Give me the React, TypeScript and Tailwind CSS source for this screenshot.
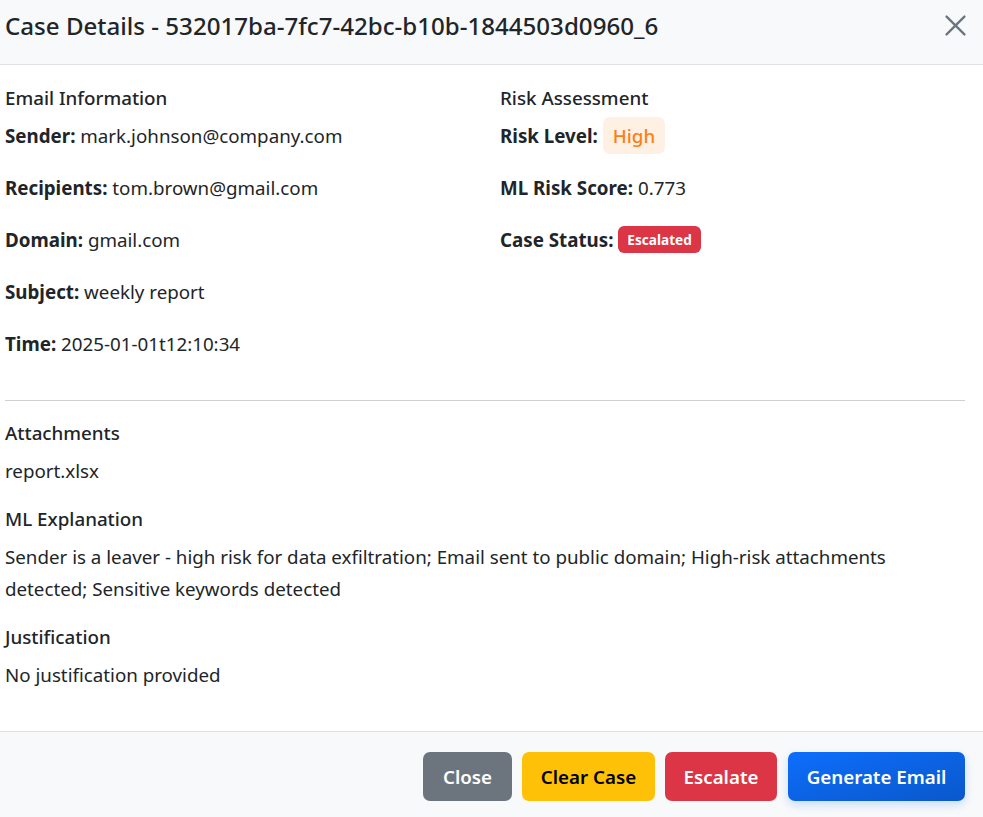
function Row({ label, children }: { label: string; children: React.ReactNode }) {
  return (
    <p className="mb-[20px]">
      <span className="font-bold">{label}</span> {children}
    </p>
  );
}

export default function App() {
  return (
    <div
      className="w-[983px] h-[817px] overflow-hidden bg-white text-[#212529] text-[18.75px] leading-[32px]"
      style={{ fontFamily: '"Noto Sans", sans-serif' }}
    >
      {/* Header */}
      <div className="h-[65px] bg-[#f8f9fa] border-b border-[#dee2e6] flex items-start justify-between pl-[5px] pr-[17px] pt-[11px]">
        <h5 className="text-[24.1px] leading-[30px] font-medium">
          Case Details - 532017ba-7fc7-42bc-b10b-1844503d0960_6
        </h5>
        <button className="mt-[4px] w-[21px] h-[21px] text-[#6c757d]" aria-label="Close">
          <svg viewBox="0 0 20 20" width="21" height="21" fill="none" stroke="currentColor" strokeWidth="2.2" strokeLinecap="round">
            <path d="M1.5 1.5 L18.5 18.5 M18.5 1.5 L1.5 18.5" />
          </svg>
        </button>
      </div>

      {/* Body */}
      <div className="pl-[5px] pr-[18px] pt-[21px] pb-[20px]">
        <div className="grid grid-cols-[495px_1fr]">
          <div>
            <h6 className="font-medium leading-[24px] mb-[10px]">Email Information</h6>
            <Row label="Sender:">mark.johnson@company.com</Row>
            <Row label="Recipients:">tom.brown@gmail.com</Row>
            <Row label="Domain:">gmail.com</Row>
            <Row label="Subject:">weekly report</Row>
            <Row label="Time:">2025-01-01t12:10:34</Row>
          </div>
          <div>
            <h6 className="font-medium leading-[24px] mb-[10px]">Risk Assessment</h6>
            <p className="mb-[20px]">
              <span className="font-bold">Risk Level:</span>{" "}
              <span className="bg-[#fff0e4] text-[#fd7e14] font-medium rounded-[7px] px-[10px] py-[6px]">High</span>
            </p>
            <Row label="ML Risk Score:">0.773</Row>
            <p className="mb-[20px]">
              <span className="font-bold">Case Status:</span>{" "}
              <span className="bg-[#dc3545] text-white font-bold text-[13.6px] leading-[14px] rounded-[6px] px-[9px] py-[4px] align-[2px]">
                Escalated
              </span>
            </p>
          </div>
        </div>

        <hr className="border-0 border-t border-[#cfd0d1] my-[20px]" />

        <h6 className="font-medium leading-[24px] mb-[10px]">Attachments</h6>
        <p className="mb-[20px]">report.xlsx</p>

        <h6 className="font-medium leading-[24px] mb-[10px]">ML Explanation</h6>
        <p className="mb-[20px]">
          Sender is a leaver - high risk for data exfiltration; Email sent to public domain; High-risk attachments detected; Sensitive keywords detected
        </p>

        <h6 className="font-medium leading-[24px] mb-[10px]">Justification</h6>
        <p className="mb-[20px]">No justification provided</p>
      </div>

      {/* Footer */}
      <div className="bg-[#f8f9fa] border-t border-[#dee2e6] h-[86px] flex items-start justify-end gap-[10px] pr-[18px] pt-[20px]">
        <button className="h-[49px] w-[89px] rounded-[7px] bg-[#6c757d] text-white font-semibold">Close</button>
        <button className="h-[49px] w-[133px] rounded-[7px] bg-[#ffc107] text-black font-semibold">Clear Case</button>
        <button className="h-[49px] w-[112px] rounded-[7px] bg-[#dc3545] text-white font-semibold">Escalate</button>
        <button className="h-[49px] w-[177px] ml-[1px] rounded-[7px] bg-gradient-to-br from-[#0d6efd] to-[#0a58ca] text-white font-semibold shadow-[0_4px_10px_rgba(13,110,253,0.2)]">
          Generate Email
        </button>
      </div>
    </div>
  );
}
